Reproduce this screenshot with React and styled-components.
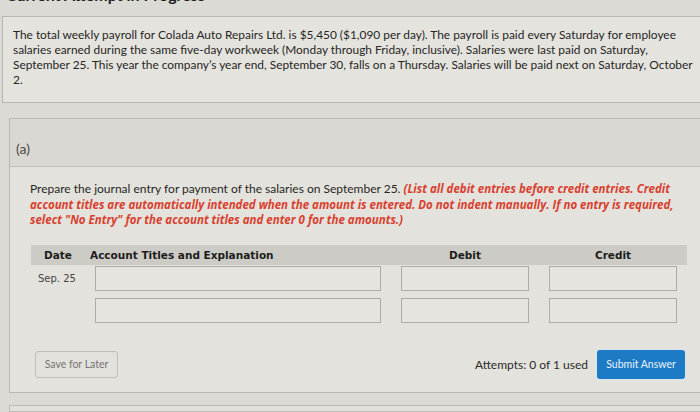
import React from "react";
import styled, { createGlobalStyle } from "styled-components";

const GlobalStyle = createGlobalStyle`
  html, body {
    margin: 0;
    padding: 0;
    background: #dcdad4;
    overflow: hidden;
  }
  body {
    font-family: Lato, "Liberation Sans", sans-serif;
    color: #2a2a2a;
  }
`;

const Page = styled.div`
  width: 700px;
  height: 412px;
  overflow: hidden;
  display: flex;
  flex-direction: column;
`;

const Heading = styled.h2`
  margin: -14px 0 0 6px;
  height: 18px;
  font: 700 16px/17px Lato, sans-serif;
  color: #1e1e1e;
  white-space: nowrap;
`;

const ProblemBox = styled.div`
  margin: 13px -30px 0 2px;
  padding: 10px 32px 15px 10px;
  border: 1px solid #b9b7b1;
  background: #e5e3dd;
  font-size: 11.9px;
  line-height: 15px;
  color: #262626;
`;

const Section = styled.div`
  margin: 15px -30px 0 9px;
  border: 1px solid #b9b7b1;
  background: #e4e2dc;
`;

const Band = styled.div`
  height: 25px;
  padding: 22px 0 0 6px;
  background: #dad8d2;
  border-bottom: 1px solid #c2c0ba;
  font-size: 14px;
  line-height: 16px;
  color: #4a4a4a;
`;

const Content = styled.div`
  padding: 14px 44px 13px 20px;
`;

const Prompt = styled.p`
  margin: 0 -5px 0 0;
  font-size: 12px;
  line-height: 15.5px;
  color: #262626;
`;

const Note = styled.span`
  font-family: "Open Sans", "DejaVu Sans", sans-serif;
  font-weight: 700;
  font-style: italic;
  font-size: 11.5px;
  color: #d8402f;
`;

const Table = styled.div`
  margin: 17px 0 0 1px;
  display: grid;
  grid-template-columns: 54px 306px 148px 148px;
  row-gap: 7px;
`;

const HeadCell = styled.div`
  height: 20px;
  margin-bottom: -6px;
  display: flex;
  align-items: center;
  justify-content: ${(p) => (p.left ? "flex-start" : "center")};
  padding-left: ${(p) => (p.left ? "5px" : "0")};
  background: #cdcbc5;
  font-family: "DejaVu Sans", Verdana, sans-serif;
  font-weight: 700;
  font-size: 10.5px;
  color: #1c1c1c;
`;

const DateCell = styled.div`
  display: flex;
  align-items: center;
  padding-left: 7px;
  font-family: "DejaVu Sans", Verdana, sans-serif;
  font-size: 10px;
  color: #444;
`;

const Field = styled.div`
  height: 23px;
  margin: 0 10px;
  border: 1px solid #aeaca6;
  background: #e6e4de;
`;

const Footer = styled.div`
  margin: 27px 0 0 5px;
  display: flex;
  align-items: center;
  justify-content: space-between;
`;

const SaveButton = styled.button`
  width: 83px;
  height: 27px;
  padding: 0;
  border: 1px solid #c0beb8;
  border-radius: 3px;
  background: #e3e1db;
  font-family: Lato, sans-serif;
  font-size: 10.5px;
  color: #757575;
`;

const Right = styled.div`
  display: flex;
  align-items: center;
  gap: 9px;
`;

const Attempts = styled.span`
  font-size: 12px;
  color: #2a2a2a;
`;

const SubmitButton = styled.button`
  width: 88px;
  height: 29px;
  padding: 0;
  border: none;
  border-radius: 3px;
  background: #1d7bc6;
  box-shadow: 0 0 0 1px #d7e6f0;
  font-family: Lato, sans-serif;
  font-size: 10.5px;
  color: #e8f2fa;
`;

const NextBox = styled.div`
  margin: 12px -30px 0 9px;
  height: 20px;
  border: 1px solid #bdbbb5;
  background: #e2e0da;
`;

const rows = [0, 1];

export default function App() {
  return (
    <Page>
      <GlobalStyle />
      <Heading>Current Attempt in Progress</Heading>
      <ProblemBox>
        The total weekly payroll for Colada Auto Repairs Ltd. is $5,450 ($1,090 per day). The
        payroll is paid every Saturday for employee salaries earned during the same five-day
        workweek (Monday through Friday, inclusive). Salaries were last paid on Saturday,
        September 25. This year the company’s year end, September 30, falls on a Thursday.
        Salaries will be paid next on Saturday, October 2.
      </ProblemBox>
      <Section>
        <Band>(a)</Band>
        <Content>
          <Prompt>
            Prepare the journal entry for payment of the salaries on September 25.{" "}
            <Note>
              (List all debit entries before credit entries. Credit account titles are
              automatically intended when the amount is entered. Do not indent manually. If no
              entry is required, select "No Entry" for the account titles and enter 0 for the
              amounts.)
            </Note>
          </Prompt>
          <Table>
            <HeadCell>Date</HeadCell>
            <HeadCell left>Account Titles and Explanation</HeadCell>
            <HeadCell>Debit</HeadCell>
            <HeadCell>Credit</HeadCell>
            {rows.map((r) => (
              <React.Fragment key={r}>
                <DateCell>{r === 0 ? "Sep. 25" : ""}</DateCell>
                <Field />
                <Field />
                <Field />
              </React.Fragment>
            ))}
          </Table>
          <Footer>
            <SaveButton>Save for Later</SaveButton>
            <Right>
              <Attempts>Attempts: 0 of 1 used</Attempts>
              <SubmitButton>Submit Answer</SubmitButton>
            </Right>
          </Footer>
        </Content>
      </Section>
      <NextBox />
    </Page>
  );
}
